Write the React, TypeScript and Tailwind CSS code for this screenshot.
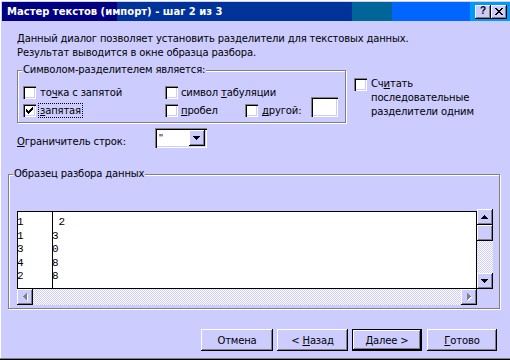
import React from "react";

const RAISED =
  "shadow-[inset_-1px_-1px_0_#000000,inset_1px_1px_0_#ffffff,inset_-2px_-2px_0_#808080]";
const SUNKEN =
  "shadow-[inset_1px_1px_0_#808080,inset_2px_2px_0_#000000,inset_-1px_-1px_0_#ffffff,inset_-2px_-2px_0_#ccccff]";
const ETCHED =
  "border border-[#808080] shadow-[inset_1px_1px_0_#ffffff,1px_1px_0_#ffffff]";
const CHECKER =
  "bg-[repeating-conic-gradient(#ffffff_0_25%,#ccccff_0_50%)] [background-size:2px_2px]";

function Tri({ dir, color = "#000", shadow }: { dir: "up" | "down" | "left" | "right"; color?: string; shadow?: boolean }) {
  const rects: [number, number, number, number][] = [];
  for (let i = 0; i < 4; i++) {
    const w = 1 + i * 2;
    const x = 3 - i;
    if (dir === "up") rects.push([x, i, w, 1]);
    if (dir === "down") rects.push([x, 3 - i, w, 1]);
    if (dir === "left") rects.push([i, x, 1, w]);
    if (dir === "right") rects.push([3 - i, x, 1, w]);
  }
  const vw = dir === "up" || dir === "down" ? 7 : 4;
  const vh = dir === "up" || dir === "down" ? 4 : 7;
  return (
    <svg width={vw + 1} height={vh + 1} viewBox={`0 0 ${vw + 1} ${vh + 1}`} shapeRendering="crispEdges">
      {shadow &&
        rects.map((r, i) => <rect key={"s" + i} x={r[0] + 1} y={r[1] + 1} width={r[2]} height={r[3]} fill="#ffffff" />)}
      {rects.map((r, i) => (
        <rect key={i} x={r[0]} y={r[1]} width={r[2]} height={r[3]} fill={color} />
      ))}
    </svg>
  );
}

function Check({ checked }: { checked?: boolean }) {
  const px: [number, number, number, number][] = [
    [6, 0, 1, 1],
    [5, 1, 2, 1],
    [0, 2, 1, 1],
    [4, 2, 3, 1],
    [0, 3, 2, 1],
    [3, 3, 3, 1],
    [0, 4, 5, 1],
    [1, 5, 3, 1],
    [2, 6, 1, 1],
  ];
  return (
    <div className={`w-[13px] h-[13px] shrink-0 bg-white flex items-center justify-center ${SUNKEN}`}>
      {checked && (
        <svg width="7" height="7" viewBox="0 0 7 7" shapeRendering="crispEdges">
          {px.map((r, i) => (
            <rect key={i} x={r[0]} y={r[1]} width={r[2]} height={r[3]} fill="#000" />
          ))}
        </svg>
      )}
    </div>
  );
}

function ScrollBtn({ children }: { children: React.ReactNode }) {
  return (
    <div className={`w-[16px] h-[16px] shrink-0 bg-[#ccccff] flex items-center justify-center ${RAISED}`}>
      {children}
    </div>
  );
}

export default function App() {
  const rows: [string, string][] = [
    ["1", " 2"],
    ["1", "3"],
    ["3", "0"],
    ["4", "8"],
    ["2", "8"],
  ];
  return (
    <div className="w-[510px] h-[360px] overflow-hidden bg-[#ccccff] pl-[2px] pt-[2px] flex flex-col text-black text-[10px] tracking-[-0.15px] font-['DejaVu_Sans',sans-serif] shadow-[inset_0_-1px_0_#000000,inset_0_-2px_0_#808080,inset_1px_1px_0_#ffffff]">
      {/* Title bar */}
      <div className="h-[19px] shrink-0 flex items-center pl-[5px] pr-[3px] bg-[linear-gradient(to_right,#000080_0px,#000080_115px,#003399_115px,#003399_350px,#006699_350px,#006699_390px,#0066ff_390px,#0066ff_468px,#0099ff_468px)]">
        <span className="text-white font-bold text-[10px] tracking-normal leading-[14px] whitespace-nowrap">
          Мастер текстов (импорт) - шаг 2 из 3
        </span>
        <div className="ml-auto flex">
          <div className={`w-[16px] h-[14px] bg-[#ccccff] flex items-center justify-center ${RAISED}`}>
            <span className="font-bold text-[10px] leading-[10px] -mt-[1px] font-['Liberation_Sans',sans-serif]">?</span>
          </div>
          <div className={`w-[16px] h-[14px] bg-[#ccccff] flex items-center justify-center ${RAISED}`}>
            <svg width="8" height="7" viewBox="0 0 8 7" shapeRendering="crispEdges" className="-mt-[1px]">
              <path d="M0 0h2v1h1v1h2V1h1V0h2v1H7v1H6v1H5v1h1v1h1v1h1v1H6V6H5V5H3v1H2v1H0V6h1V5h1V4h1V3H2V2H1V1H0z" fill="#000" />
            </svg>
          </div>
        </div>
      </div>

      {/* Description */}
      <div className="mt-[11px] ml-[15px] leading-[14px]">
        <div>Данный диалог позволяет установить разделители для текстовых данных.</div>
        <div>Результат выводится в окне образца разбора.</div>
      </div>

      {/* Delimiters */}
      <div className="mt-[10px] ml-[15px] flex">
        <div className={`relative w-[329px] h-[53px] shrink-0 ${ETCHED}`}>
          <div className="absolute left-[4px] -top-[8px] px-[1px] bg-[#ccccff] leading-[14px] whitespace-nowrap">
            Символом-разделителем является:
          </div>
          <div className="pt-[15px] pl-[5px] flex flex-col">
            <div className="h-[13px] flex items-center">
              <div className="w-[142px] flex items-center">
                <Check />
                <span className="ml-[4px] leading-[13px] whitespace-nowrap">
                  то<u>ч</u>ка с запятой
                </span>
              </div>
              <div className="flex items-center">
                <Check />
                <span className="ml-[3px] leading-[13px] whitespace-nowrap">
                  символ <u>т</u>абуляции
                </span>
              </div>
            </div>
            <div className="mt-[5px] h-[13px] flex items-center">
              <div className="w-[142px] flex items-center">
                <Check checked />
                <span className="ml-[2px] px-[1px] border border-dotted border-black leading-[13px] whitespace-nowrap">
                  <u>з</u>апятая
                </span>
              </div>
              <div className="w-[80px] flex items-center">
                <Check />
                <span className="ml-[3px] leading-[13px] whitespace-nowrap">
                  <u>п</u>робел
                </span>
              </div>
              <div className="flex items-center">
                <Check />
                <span className="ml-[4px] leading-[13px] whitespace-nowrap">
                  <u>д</u>ругой:
                </span>
                <div className={`ml-[10px] self-start -mt-[7px] w-[27px] h-[20px] bg-white ${SUNKEN}`} />
              </div>
            </div>
          </div>
        </div>
        <div className="ml-[8px] mt-[8px] flex items-start">
          <Check />
          <div className="ml-[4px] leading-[14px] -mt-[1px]">
            Сч<u>и</u>тать
            <br />
            последовательные
            <br />
            разделители одним
          </div>
        </div>
      </div>

      {/* Text qualifier */}
      <div className="mt-[5px] ml-[15px] h-[20px] flex items-start">
        <div className="w-[138px] mt-[7px] leading-[14px]">
          <u>О</u>граничитель строк:
        </div>
        <div className={`w-[52px] h-[20px] bg-white p-[2px] flex ${SUNKEN}`}>
          <div className="flex-1 pl-[2px] leading-[16px] font-['Liberation_Sans',sans-serif] text-[11px] text-black">"</div>
          <ScrollBtn>
            <Tri dir="down" />
          </ScrollBtn>
        </div>
      </div>

      {/* Data preview */}
      <div className={`relative mt-[26px] ml-[6px] w-[492px] h-[135px] shrink-0 ${ETCHED}`}>
        <div className="absolute left-[4px] -top-[8px] px-[1px] bg-[#ccccff] leading-[14px] whitespace-nowrap">
          Образец разбора данных
        </div>
        <div className="pl-[8px] pt-[34px] flex">
          <div className="w-[460px] flex flex-col">
            <div className="mt-[2px] h-[78px] border border-black bg-white flex font-['Liberation_Mono',monospace] text-[11px] tracking-normal leading-[13.5px]">
              <div className="w-[35px] border-r border-black pt-[4px]">
                {rows.map((r, i) => (
                  <div key={i} className="whitespace-pre -ml-[1px]">
                    {r[0]}
                  </div>
                ))}
              </div>
              <div className="pt-[4px]">
                {rows.map((r, i) => (
                  <div key={i} className="whitespace-pre -ml-[1px]">
                    {r[1]}
                  </div>
                ))}
              </div>
            </div>
            <div className="h-[16px] flex">
              <ScrollBtn>
                <Tri dir="left" color="#808080" shadow />
              </ScrollBtn>
              <div className={`flex-1 ${CHECKER}`} />
              <ScrollBtn>
                <Tri dir="right" color="#808080" shadow />
              </ScrollBtn>
            </div>
          </div>
          <div className="w-[16px] flex flex-col">
            <ScrollBtn>
              <Tri dir="up" />
            </ScrollBtn>
            <ScrollBtn>{null}</ScrollBtn>
            <div className={`h-[32px] ${CHECKER}`} />
            <ScrollBtn>
              <Tri dir="down" />
            </ScrollBtn>
          </div>
        </div>
      </div>

      {/* Buttons */}
      <div className="mt-[20px] ml-[199px] flex">
        <div className={`w-[72px] h-[22px] bg-[#ccccff] flex items-center justify-center ${RAISED}`}>Отмена</div>
        <div className={`ml-[4px] w-[71px] h-[22px] bg-[#ccccff] flex items-center justify-center ${RAISED}`}>
          &lt;&nbsp;<u>Н</u>азад
        </div>
        <div className="ml-[4px] w-[70px] h-[22px] border border-black">
          <div className={`w-full h-full bg-[#ccccff] flex items-center justify-center ${RAISED}`}>Далее &gt;</div>
        </div>
        <div className={`ml-[5px] w-[70px] h-[22px] bg-[#ccccff] flex items-center justify-center ${RAISED}`}>
          <u>Г</u>отово
        </div>
      </div>
    </div>
  );
}
